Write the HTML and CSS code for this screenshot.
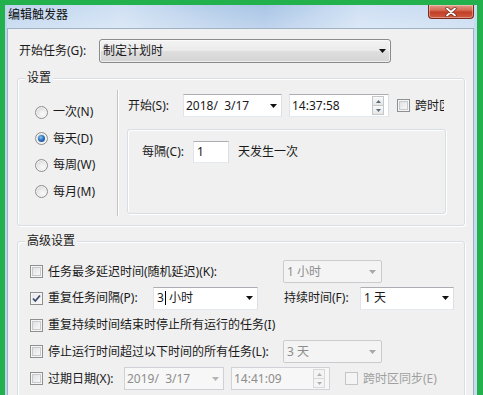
FILE: index.html
```html
<!DOCTYPE html>
<html lang="zh-CN">
<head>
<meta charset="utf-8">
<title>编辑触发器</title>
<link rel="stylesheet" href="styles.css">
</head>
<body>
<div class="window">
  <div class="titlebar">
    <span class="title">编辑触发器</span>
    <span class="close">
      <svg width="12" height="10" viewBox="0 0 12 10"><path d="M2 1.5L10 8.5M10 1.5L2 8.5" stroke="#6b2a20" stroke-width="3.2" stroke-linecap="round"/><path d="M2 1.5L10 8.5M10 1.5L2 8.5" stroke="#fff" stroke-width="1.8" stroke-linecap="round"/></svg>
    </span>
  </div>
  <div class="client">
    <div class="top-row">
      <span class="lbl-task">开始任务(G):</span>
      <div class="combo-btn"><span>制定计划时</span><svg class="arrow" width="7" height="4" viewBox="0 0 7 4"><path d="M0 0H7L3.5 4Z"/></svg></div>
    </div>

    <div class="group">
      <div class="group-title">设置</div>
      <div class="settings-body">
        <div class="radios">
          <div class="radio-row"><span class="radio"></span>一次(N)</div>
          <div class="radio-row"><span class="radio on"></span>每天(D)</div>
          <div class="radio-row"><span class="radio"></span>每周(W)</div>
          <div class="radio-row"><span class="radio"></span>每月(M)</div>
        </div>
        <div class="sched">
          <div class="start-row">
            <span class="lbl-start">开始(S):</span>
            <div class="field date"><span>2018/&nbsp; 3/17</span><svg class="arrow" width="7" height="4" viewBox="0 0 7 4"><path d="M0 0H7L3.5 4Z"/></svg></div>
            <div class="field time"><span>14:37:58</span><span class="spin"><b><svg width="5" height="3" viewBox="0 0 5 3"><path d="M0 3H5L2.5 0Z"/></svg></b><b><svg width="5" height="3" viewBox="0 0 5 3"><path d="M0 0H5L2.5 3Z"/></svg></b></span></div>
            <span class="check tz"></span><span class="tz-text">跨时区同步(Z)</span>
          </div>
          <div class="recur">
            <span class="lbl-every">每隔(C):</span>
            <div class="field num">1</div>
            <span class="days">天发生一次</span>
          </div>
        </div>
      </div>
    </div>

    <div class="group adv">
      <div class="group-title">高级设置</div>
      <div class="adv-rows">
        <div class="row">
          <span class="check"></span><span class="lbl-wide">任务最多延迟时间(随机延迟)(K):</span>
          <div class="dcombo w99"><span>1 小时</span><svg class="arrow" width="7" height="4" viewBox="0 0 7 4"><path d="M0 0H7L3.5 4Z"/></svg></div>
        </div>
        <div class="row">
          <span class="check on"><svg width="11" height="11" viewBox="0 0 11 11"><path d="M2 5.5L4.3 8L9 2.5" fill="none" stroke="#3a4866" stroke-width="1.7"/></svg></span><span class="lbl-repeat">重复任务间隔(P):</span>
          <div class="field ecombo"><span>3</span><span class="caret"></span><span>&nbsp;小时</span><svg class="arrow" width="7" height="4" viewBox="0 0 7 4"><path d="M0 0H7L3.5 4Z"/></svg></div>
          <span class="lbl-dur">持续时间(F):</span>
          <div class="field dur"><span>1 天</span><svg class="arrow" width="7" height="4" viewBox="0 0 7 4"><path d="M0 0H7L3.5 4Z"/></svg></div>
        </div>
        <div class="row">
          <span class="check"></span><span>重复持续时间结束时停止所有运行的任务(I)</span>
        </div>
        <div class="row">
          <span class="check"></span><span class="lbl-wide">停止运行时间超过以下时间的所有任务(L):</span>
          <div class="dcombo w99"><span>3 天</span><svg class="arrow" width="7" height="4" viewBox="0 0 7 4"><path d="M0 0H7L3.5 4Z"/></svg></div>
        </div>
        <div class="row">
          <span class="check"></span><span class="lbl-exp">过期日期(X):</span>
          <div class="dfield ddate"><span>2019/&nbsp; 3/17</span><svg class="arrow" width="7" height="4" viewBox="0 0 7 4"><path d="M0 0H7L3.5 4Z"/></svg></div>
          <div class="dfield dtime"><span>14:41:09</span><span class="spin dis"><b><svg width="5" height="3" viewBox="0 0 5 3"><path d="M0 3H5L2.5 0Z"/></svg></b><b><svg width="5" height="3" viewBox="0 0 5 3"><path d="M0 0H5L2.5 3Z"/></svg></b></span></div>
          <span class="check dis sync"></span><span class="dis-text">跨时区同步(E)</span>
        </div>
      </div>
    </div>
  </div>
</div>
</body>
</html>
```

FILE: styles.css
```css
* { box-sizing: border-box; }
html, body { margin: 0; height: 395px; overflow: hidden; }
body {
  background: #22b14c;
  padding: 5px 6px 0 5px;
  font: 12px/16px "Noto Sans", "Noto Sans CJK SC", sans-serif;
  color: #1a1a1a;
}
.window {
  width: 472px;
  height: 390px;
  padding: 0 3px 0 2px;
  display: flex;
  flex-direction: column;
  background: linear-gradient(90deg, #bdd4ee 0%, #cfe0f3 25%, #b3cce9 45%, #a9c5e6 55%, #cfe0f4 75%, #c6daf0 100%);
}
.titlebar {
  height: 23px;
  display: flex;
  align-items: flex-start;
  flex: none;
  background: linear-gradient(180deg, rgba(255,255,255,0) 0%, rgba(255,255,255,0.25) 100%);
}
.title { padding: 2px 0 0 1px; color: #111; }
.close {
  margin-left: auto;
  width: 46px;
  height: 14px;
  display: flex;
  align-items: center;
  justify-content: center;
  border: 1px solid #7d2a1c;
  border-top: none;
  border-radius: 0 0 4px 4px;
  background: linear-gradient(180deg, #e39b8a 0%, #d46a53 40%, #c23f27 55%, #cf5a3e 100%);
  box-shadow: inset 0 0 0 1px rgba(255,255,255,0.35);
}
.client {
  flex: 1;
  border: 1px solid #9fb1c4;
  background: #f0f0f0;
}
.top-row {
  display: flex;
  align-items: center;
  padding: 10px 0 0 11px;
}
.lbl-task { width: 80px; }
.combo-btn {
  width: 292px;
  height: 24px;
  display: flex;
  align-items: center;
  padding: 0 4px 0 3px;
  border: 1px solid #8a8a8a;
  border-radius: 3px;
  background: linear-gradient(180deg, #f3f3f3 0%, #ebebeb 48%, #dedede 52%, #d5d5d5 100%);
  box-shadow: inset 0 0 0 1px rgba(255,255,255,0.6);
}
.arrow { margin-left: auto; fill: #111; flex: none; }

.group {
  margin: 15px 8px 0 9px;
  border: 1px solid #d5dfe5;
  border-radius: 3px;
  box-shadow: inset 1px 1px 0 #fff, 1px 1px 0 #fff;
  padding: 0 0 9px 0;
}
.group-title {
  width: max-content;
  margin: -9px 0 0 7px;
  padding: 0 2px;
  background: #f0f0f0;
  line-height: 16px;
}
.settings-body {
  display: flex;
  margin-top: 4px;
  height: 126px;
}
.radios {
  width: 100px;
  border-right: 1px solid #c4c4c4;
  box-shadow: 1px 0 0 #fff;
  padding: 14px 0 0 17px;
  display: flex;
  flex-direction: column;
  gap: 10.67px;
}
.radio-row { display: flex; align-items: center; height: 16px; }
.radio {
  width: 13px;
  height: 13px;
  margin-right: 5px;
  border-radius: 50%;
  border: 1px solid #8e8f8f;
  background: radial-gradient(circle at 60% 65%, #fbfbfb 0, #e9e9e9 45%, #cdcdcd 80%);
  box-shadow: inset 0 0 0 1px #f6f6f6;
  display: flex;
  align-items: center;
  justify-content: center;
  flex: none;
}
.radio.on::after {
  content: "";
  width: 7px;
  height: 7px;
  border-radius: 50%;
  background: radial-gradient(circle at 40% 35%, #8fc7f2 0, #2b72c0 45%, #1a3f7a 100%);
}

.sched { width: 328px; display: flex; flex-direction: column; }
.start-row {
  width: 326px;
  overflow: hidden;
  white-space: nowrap;
  margin-top: 4px;
  padding-left: 10px;
  height: 23px;
  display: flex;
  align-items: center;
}
.lbl-start { width: 55px; flex: none; }
.field {
  height: 23px;
  display: flex;
  align-items: center;
  padding: 0 4px 0 2px;
  border: 1px solid;
  border-color: #abadb3 #dbdfe6 #e3e9ef #e2e3ea;
  background: #fff;
  flex: none;
}
.date { width: 99px; }
.time { width: 100px; margin-left: 7px; padding-right: 4px; }
.spin {
  margin-left: auto;
  width: 12px;
  height: 19px;
  display: flex;
  flex-direction: column;
}
.spin b {
  flex: 1;
  display: flex;
  align-items: center;
  justify-content: center;
  border: 1px solid #c4c7cc;
  background: linear-gradient(180deg, #fafafa, #e6e6e6);
  fill: #5a6a7e;
}
.spin b + b { border-top: none; }
.spin.dis b { border-color: #d8d8d8; fill: #b0b0b0; background: #f4f4f4; }
.check {
  width: 13px;
  height: 13px;
  flex: none;
  border: 1px solid #8e8f8f;
  background: linear-gradient(135deg, #d8dade 0%, #f1f1f1 60%, #fdfdfd 100%);
  box-shadow: inset 0 0 0 1px #f6f6f6, inset 0 0 0 2px #c6cacf;
  margin-right: 5px;
  display: flex;
  align-items: center;
  justify-content: center;
}
.check.on { background: linear-gradient(135deg, #e6e8ec 0%, #f8f8f8 100%); box-shadow: inset 0 0 0 1px #f6f6f6; }
.check.dis { border-color: #c5c5c5; background: #f4f4f4; box-shadow: none; }
.tz { margin-left: 8px; }
.recur {
  margin: 12px 0 0 9px;
  width: 319px;
  height: 85px;
  border: 1px solid #d5dfe5;
  border-radius: 3px;
  box-shadow: inset 1px 1px 0 #fff, 1px 1px 0 #fff;
  padding: 11px 0 0 14px;
  display: flex;
  align-items: flex-start;
}
.lbl-every { width: 51px; line-height: 22px; }
.num { width: 36px; height: 22px; padding-left: 3px; }
.days { margin-left: 9px; line-height: 22px; }

.adv { padding-left: 12px; padding-bottom: 20px; }
.adv .group-title { margin-left: -5px; }
.adv-rows {
  padding-top: 11px;
  display: flex;
  flex-direction: column;
  gap: 3.75px;
}
.row { display: flex; align-items: center; height: 23px; white-space: nowrap; }
.lbl-wide { width: 235px; flex: none; }
.lbl-repeat { width: 105px; flex: none; }
.lbl-dur { width: 76px; margin-left: 26px; flex: none; }
.lbl-exp { width: 76px; flex: none; }
.dcombo {
  height: 23px;
  display: flex;
  align-items: center;
  padding: 0 5px 0 3px;
  border: 1px solid #c9cbcf;
  border-radius: 2px;
  background: #f4f4f4;
  color: #8d8d8d;
  fill: #a8a8a8;
}
.dcombo .arrow { fill: #a8a8a8; }
.w99 { width: 99px; }
.ecombo { width: 105px; padding-left: 3px; }
.caret { width: 1px; height: 14px; background: #000; margin-left: 1px; }
.dur { width: 94px; padding-left: 3px; }
.dfield {
  height: 23px;
  display: flex;
  align-items: center;
  padding: 0 4px 0 2px;
  border: 1px solid #cfd1d6;
  background: #f7f7f7;
  color: #8d8d8d;
  flex: none;
}
.dfield .arrow { fill: #b4b4b4; }
.ddate { width: 100px; }
.dtime { width: 99px; margin-left: 7px; }
.sync { margin-left: 15px; }
.dis-text { color: #a0a0a0; }
```
